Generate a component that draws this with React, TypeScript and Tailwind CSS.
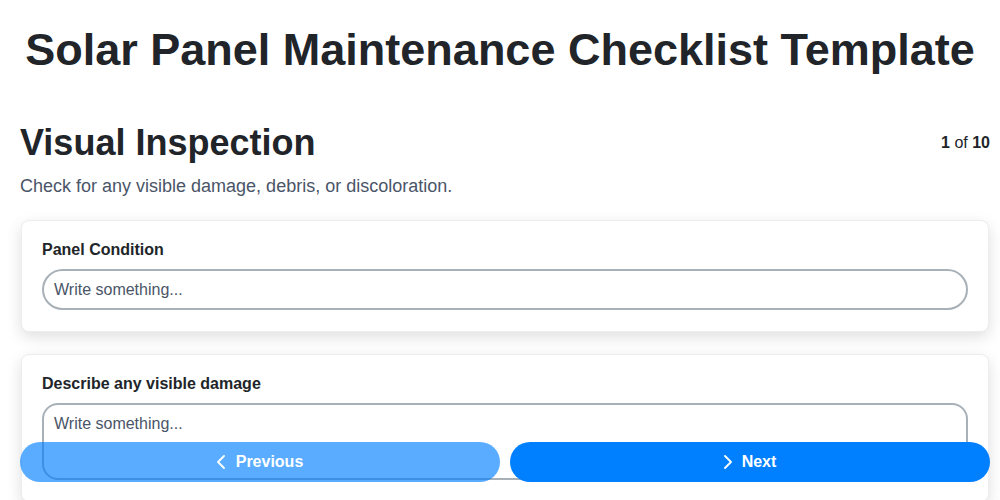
const fields = [
  { label: 'Panel Condition', type: 'input' },
  { label: 'Describe any visible damage', type: 'textarea' },
];

function Chevron({ dir }: { dir: 'left' | 'right' }) {
  return (
    <svg width="8" height="14" viewBox="0 0 8 14" fill="none" stroke="currentColor" strokeWidth="1.8" strokeLinecap="round" strokeLinejoin="round">
      <polyline points={dir === 'left' ? '7,1 1,7 7,13' : '1,1 7,7 1,13'} />
    </svg>
  );
}

export default function App() {
  return (
    <div className="h-screen overflow-hidden bg-white text-[#212529]" style={{ fontFamily: '"Liberation Sans", Arial, sans-serif' }}>
      <h1 className="pt-[24px] text-center text-[45px] leading-[52px] font-bold">
        Solar Panel Maintenance Checklist Template
      </h1>

      <div className="pt-[46px] pr-[10px] pb-24 pl-5">
        <div className="flex items-start justify-between">
          <h2 className="text-[36px] leading-[42px] font-bold">Visual Inspection</h2>
          <div className="pt-[2px] text-base leading-[38px]">
            <span className="font-bold">1</span> of <span className="font-bold">10</span>
          </div>
        </div>
        <p className="mt-[10px] text-lg leading-6 text-[#4a5568]">
          Check for any visible damage, debris, or discoloration.
        </p>

        <div className="mt-[22px] flex flex-col gap-[22px]">
          {fields.map(f => (
            <div key={f.label} className="mx-px rounded-lg border border-[#ededf1] bg-white px-5 pt-[19px] pb-[21px] shadow-[0_5px_15px_rgba(0,0,0,0.13)]">
              <label className="block text-base leading-5 font-bold">{f.label}</label>
              {f.type === 'input' ? (
                <input
                  placeholder="Write something..."
                  className="mt-[9px] block h-[41px] w-full rounded-full border-2 border-[#a8b0b8] px-[10px] text-base placeholder:text-[#4a5568] outline-none"
                />
              ) : (
                <textarea
                  placeholder="Write something..."
                  className="mt-[9px] block h-[77px] w-full resize-none rounded-2xl border-2 border-[#a8b0b8] px-[10px] py-[9px] text-base leading-5 placeholder:text-[#4a5568] outline-none"
                />
              )}
            </div>
          ))}
        </div>
      </div>

      <div className="fixed right-[10px] bottom-[18px] left-5 flex gap-[10px]">
        <button className="flex h-[40px] flex-1 items-center justify-center gap-[11px] rounded-full bg-[#0080ff] text-base font-bold text-white opacity-65">
          <Chevron dir="left" /> Previous
        </button>
        <button className="flex h-[40px] flex-1 items-center justify-center gap-[10px] rounded-full bg-[#0080ff] text-base font-bold text-white">
          <Chevron dir="right" /> Next
        </button>
      </div>
    </div>
  );
}
